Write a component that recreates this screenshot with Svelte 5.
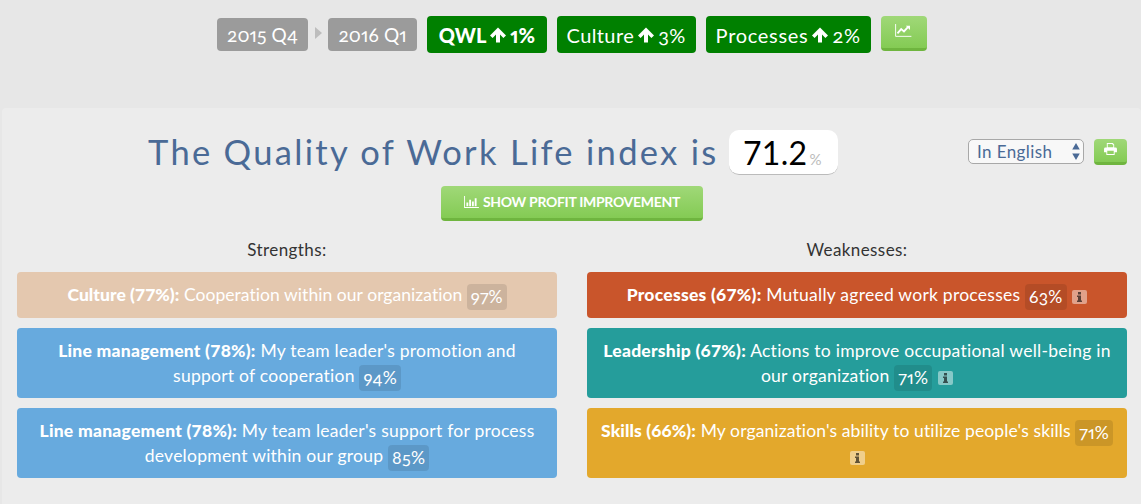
<script>
  const strengths = [
    { cls: 'sand', head: 'Culture (77%):', text: 'Cooperation within our organization', pct: '97%' },
    { cls: 'blue', head: 'Line management (78%):', text: "My team leader's promotion and support of cooperation", pct: '94%' },
    { cls: 'blue', head: 'Line management (78%):', text: "My team leader's support for process development within our group", pct: '85%' }
  ];
  const weaknesses = [
    { cls: 'rust', head: 'Processes (67%):', text: 'Mutually agreed work processes', pct: '63%', info: true },
    { cls: 'teal', head: 'Leadership (67%):', text: 'Actions to improve occupational well-being in our organization', pct: '71%', info: true },
    { cls: 'gold', head: 'Skills (66%):', text: "My organization's ability to utilize people's skills", pct: '71%', info: true }
  ];
  const deltas = [
    { name: 'QWL', val: '1%', cls: 'qwl' },
    { name: 'Culture', val: '3%', cls: 'cult' },
    { name: 'Processes', val: '2%', cls: 'proc' }
  ];
  const columns = [
    { title: 'Strengths:', items: strengths },
    { title: 'Weaknesses:', items: weaknesses }
  ];
</script>

<div class="page">
  <header class="top">
    <span class="period">2015 Q4</span>
    <span class="tri"></span>
    <span class="period next">2016 Q1</span>
    {#each deltas as d}
      <span class="delta {d.cls}">
        {d.name}
        <svg class="up" viewBox="0 0 16 16"><path d="M8 0.500 16 8.500 13.400 11 10 7.600V15.500H6V7.600L2.600 11 0 8.500Z" fill="#fff"/></svg>
        {d.val}
      </span>
    {/each}
    <button class="btn chart" aria-label="Trend">
      <svg viewBox="0 0 18 14" width="17" height="13"><path d="M0.500 0V13.300H17.500" fill="none" stroke="#fff" stroke-width="1"/><path d="M2.500 10 6.500 5.500 9.500 8 14 3" fill="none" stroke="#fff" stroke-width="2"/><path d="M11.500 2H16V6.500Z" fill="#fff"/></svg>
    </button>
  </header>

  <main class="panel">
    <div class="title-row">
      <h1>The Quality of Work Life index is</h1>
      <div class="value">71.2<small>%</small></div>
      <div class="tools">
        <div class="select-wrap">
          <select aria-label="Language"><option>In English</option></select>
          <svg viewBox="0 0 8 18" width="8" height="17"><path d="M4 0 8 7H0ZM4 18 0 11H8Z" fill="#4a6a96"/></svg>
        </div>
        <button class="btn print" aria-label="Print">
          <svg viewBox="0 0 14 13" width="13" height="12"><path fill="#fff" fill-rule="evenodd" d="M3 0H9.500L11 1.500V5H3ZM4 1V4.500H10V2H9V1ZM1.500 5H12.500A1.500 1.500 0 0 1 14 6.500V10H11.500V13H2.500V10H0V6.500A1.500 1.500 0 0 1 1.500 5ZM3.500 8.500V12H10.500V8.500Z"/></svg>
        </button>
      </div>
    </div>

    <div class="cta-row">
      <button class="btn cta">
        <svg viewBox="0 0 16 13" width="15" height="12"><path fill="#fff" d="M0 0H1V12H16V13H0ZM2.500 7H4.500V11H2.500ZM5.500 4H7.500V11H5.500ZM8.500 6H10.500V11H8.500ZM11.500 2.500H13.500V11H11.500Z"/></svg>
        SHOW PROFIT IMPROVEMENT
      </button>
    </div>

    <div class="cols">
      {#each columns as col}
        <section>
          <h2>{col.title}</h2>
          {#each col.items as it}
            <div class="card {it.cls}">
              <b>{it.head}</b> {it.text} <span class="pct">{it.pct}</span>
              {#if it.info}
                <span class="info"><svg viewBox="0 0 15 14" width="15" height="14"><rect width="15" height="14" rx="2" fill="#fff" fill-opacity=".45"/><path class="i" d="M6 2H9V4.500H6ZM5 5.500H9V10.500H10V12H5V10.500H6V7H5Z"/></svg></span>
              {/if}
            </div>
          {/each}
        </section>
      {/each}
    </div>
  </main>
</div>

<style>
  :global(body) {
    margin: 0;
    background: #e7e7e7;
  }
  .page {
    width: 1141px;
    height: 504px;
    overflow: hidden;
    font-family: Lato, "Open Sans", sans-serif;
    color: #333;
  }
  .top {
    height: 92px;
    padding: 16px 0 0 217px;
    display: flex;
    align-items: flex-start;
  }
  .period {
    margin-top: 2px;
    height: 33px;
    line-height: 33px;
    padding: 0 10px;
    background: #9b9b9b;
    color: #fff;
    border-radius: 4px;
    font-size: 19px;
    font-variant-numeric: oldstyle-nums proportional-nums;
    letter-spacing: 0.1px;
  }
  .period.next { padding: 0 10.700px; }
  .tri {
    margin: 11px 6px 0 7px;
    border-left: 7px solid #bdbdbd;
    border-top: 6.500px solid transparent;
    border-bottom: 6.500px solid transparent;
  }
  .delta {
    margin-left: 10px;
    height: 37px;
    line-height: 36px;
    padding: 0 10px;
    background: #008000;
    color: #fff;
    border-radius: 4px;
    font-size: 20px;
    white-space: nowrap;
    display: flex;
    gap: 4px;
    align-items: center;
    font-variant-numeric: oldstyle-nums proportional-nums;
  }
  .qwl { font-weight: 900; letter-spacing: 0; padding: 0 11.500px; }
  .cult { letter-spacing: 0.4px; }
  .proc { letter-spacing: 0.7px; }
  .up { width: 16px; height: 16px; }
  .btn {
    border: 0;
    border-bottom: 3px solid #6fb53f;
    border-radius: 4px;
    background: linear-gradient(#a0d878, #84cb54);
    color: #fff;
    padding: 0;
    display: flex;
    align-items: center;
    justify-content: center;
    font-family: inherit;
  }
  .chart {
    width: 46px;
    height: 35px;
    margin-left: 10px;
    padding-bottom: 4px;
  }
  .panel {
    margin-left: 2px;
    height: 396px;
    background: #ececec;
    border-radius: 4px 4px 0 0;
    box-sizing: border-box;
    padding: 22px 14px 0 15px;
  }
  .title-row {
    display: flex;
    align-items: flex-start;
    padding-left: 131px;
    height: 56px;
  }
  h1 {
    margin: 0;
    width: 581px;
    flex: none;
    font-size: 34.500px;
    font-weight: 400;
    line-height: 44px;
    color: #4a6a96;
    letter-spacing: 2.300px;
    white-space: nowrap;
  }
  .value {
    width: 109px;
    height: 45px;
    box-sizing: border-box;
    background: #fff;
    border-radius: 10px;
    border-bottom: 1px solid #bbb;
    line-height: 46px;
    padding-left: 14px;
    font-size: 32px;
    color: #000;
    letter-spacing: 0.3px;
  }
  .value small {
    font-size: 15px;
    color: #bbb;
    margin-left: 2px;
  }
  .tools {
    margin-left: 130px;
    margin-top: 9px;
    display: flex;
    gap: 10px;
  }
  .select-wrap {
    position: relative;
    width: 116px;
    height: 25px;
  }
  .select-wrap svg {
    position: absolute;
    right: 4px;
    top: 4px;
    pointer-events: none;
  }
  select {
    appearance: none;
    width: 116px;
    height: 25px;
    box-sizing: border-box;
    border: 1px solid #a8a8a8;
    border-radius: 5px;
    background: #f8f8f8;
    color: #4a6a96;
    font: 17px Lato, sans-serif;
    padding: 0 0 0 8px;
    letter-spacing: 0.4px;
  }
  .print {
    width: 33px;
    height: 26px;
    padding-bottom: 3px;
  }
  .cta-row {
    display: flex;
    padding-left: 424px;
  }
  .cta {
    width: 262px;
    height: 35px;
    gap: 4px;
    padding-bottom: 1px;
    font-size: 14px;
    font-weight: 700;
    letter-spacing: -0.3px;
  }
  .cols {
    display: grid;
    grid-template-columns: 540px 540px;
    column-gap: 30px;
    margin-top: 16px;
  }
  h2 {
    margin: 0 0 10px;
    font-size: 17px;
    line-height: 25px;
    font-weight: 400;
    text-align: center;
    letter-spacing: 0.4px;
  }
  .card {
    box-sizing: border-box;
    min-height: 46px;
    padding: 10px;
    margin-bottom: 10px;
    border-radius: 4px;
    color: #fff;
    text-align: center;
    font-size: 17.500px;
    line-height: 25px;
    letter-spacing: 0.25px;
  }
  .card b { font-weight: 900; }
  .sand { background: #e4c8af; letter-spacing: 0.05px; }
  .blue { background: #67aade; }
  .rust { background: #c9552b; }
  .teal { background: #259d9b; }
  .gold { background: #e3a82c; letter-spacing: 0.12px; }
  .pct {
    display: inline-block;
    line-height: 26px;
    height: 26px;
    padding: 0 4px;
    margin-block: -3px;
    border-radius: 4px;
    background: rgba(0, 0, 0, 0.1);
    vertical-align: -2px;
    font-variant-numeric: oldstyle-nums proportional-nums;
  }
  .info {
    display: inline-block;
    vertical-align: -3px;
    margin-left: 1px;
    line-height: 0;
  }
  .i { fill: #000; fill-opacity: 0.6; }
</style>
